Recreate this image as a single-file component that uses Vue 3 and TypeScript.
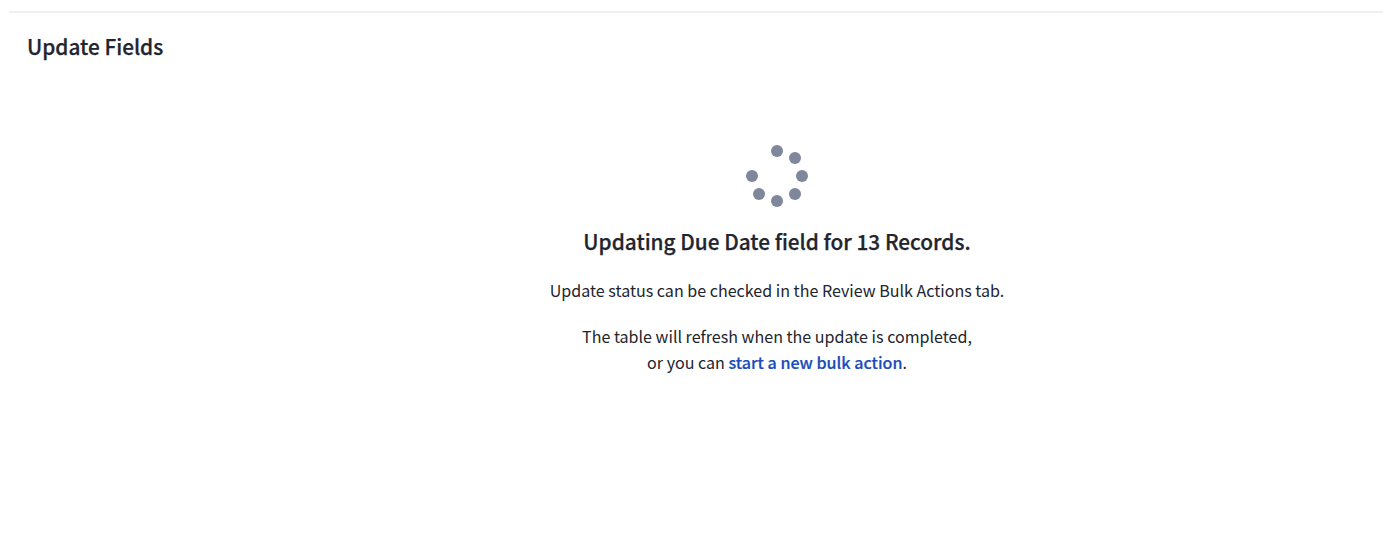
<script setup lang="ts">
const dots: [number, number][] = [
  [777, 151],
  [795, 158],
  [802, 176],
  [795, 194],
  [777, 201],
  [759, 194],
  [752, 176],
]
const origin = { x: 745, y: 144 }
</script>

<template>
  <main class="page">
    <h2 class="title">Update Fields</h2>
    <section class="status">
      <svg class="spinner" width="64" height="64" viewBox="0 0 64 64" aria-hidden="true">
        <circle
          v-for="(d, i) in dots"
          :key="i"
          :cx="d[0] - origin.x"
          :cy="d[1] - origin.y"
          r="6"
          fill="#7f879c"
        />
      </svg>
      <h3 class="heading">Updating Due Date field for 13 Records.</h3>
      <p class="line">Update status can be checked in the Review Bulk Actions tab.</p>
      <p class="line second">
        The table will refresh when the update is completed,<br />
        or you can <a class="link">start a new bulk action</a>.
      </p>
    </section>
  </main>
</template>

<style>
html, body { margin: 0; background: #fff; }
</style>

<style scoped>
.page {
  box-sizing: border-box;
  height: 532px;
  margin-top: 11px;
  padding-top: 1px;
  font-family: "Noto Sans CJK JP", "Noto Sans", sans-serif;
  color: #22252e;
  background: linear-gradient(#edf0f5, #edf0f5) 9px 0 / 1374px 2px no-repeat;
}
.title {
  margin: 0;
  padding: 21px 0 0 27px;
  font-size: 20.8px;
  line-height: 26px;
  font-weight: 500;
  -webkit-text-stroke: 0.25px #22252e;
}
.status {
  display: flex;
  flex-direction: column;
  align-items: center;
  padding-top: 85px;
  padding-left: 156px;
}
.spinner { display: block; }
.heading {
  margin: 19px 0 0;
  font-size: 20.8px;
  line-height: 28px;
  font-weight: 500;
  -webkit-text-stroke: 0.25px #22252e;
}
.line {
  margin: 22px 0 0;
  font-size: 16.07px;
  line-height: 26px;
  text-align: center;
}
.second { margin-top: 20px; }
.link {
  color: #1a4db8;
  font-weight: 500;
  -webkit-text-stroke: 0.2px #1a4db8;
}
</style>
